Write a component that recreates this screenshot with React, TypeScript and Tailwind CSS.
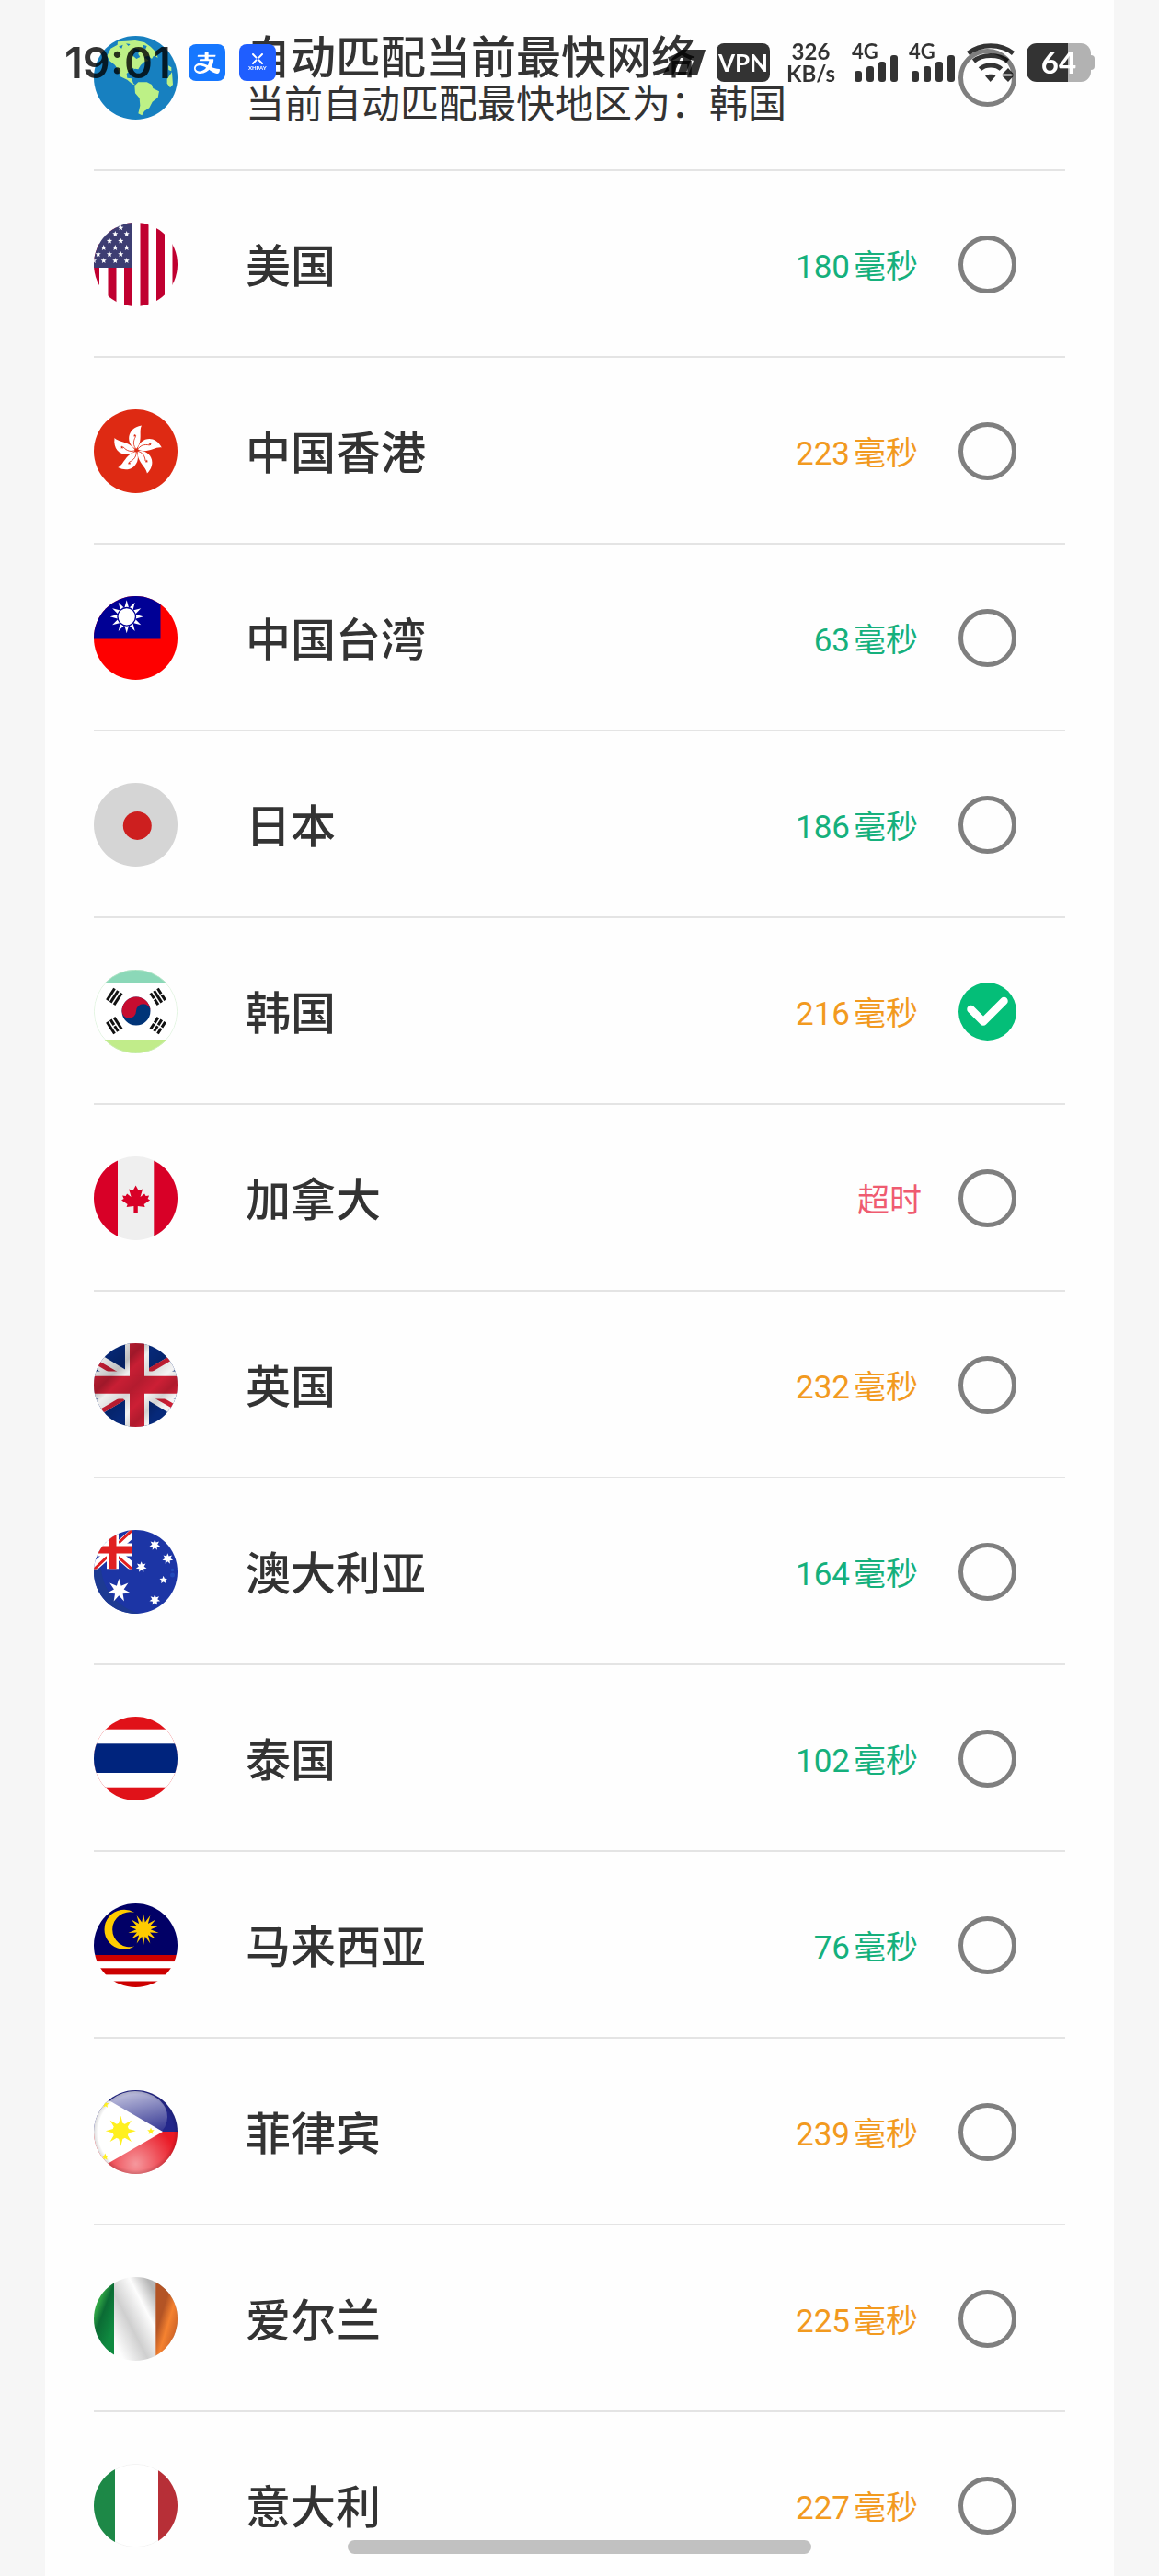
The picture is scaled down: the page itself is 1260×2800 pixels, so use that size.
import { useState, type ReactNode } from "react";
import { AiOutlineAlipay } from "react-icons/ai";

/** Points of a regular star with n tips, the first one pointing up. */
function star(cx: number, cy: number, outer: number, inner: number, n = 5): string {
  return Array.from({ length: n * 2 }, (_, i) => {
    const r = i % 2 === 0 ? outer : inner;
    const a = (Math.PI * i) / n - Math.PI / 2;
    return `${(cx + r * Math.cos(a)).toFixed(2)},${(cy + r * Math.sin(a)).toFixed(2)}`;
  }).join(" ");
}

function Flag({ children }: { children: ReactNode }) {
  return (
    <svg viewBox="0 0 91 91" className="size-[91px] shrink-0 rounded-full" aria-hidden="true">
      {children}
    </svg>
  );
}

function Globe() {
  return (
    <Flag>
      <rect width="91" height="91" fill="#1780c0" />
      <g transform="scale(0.3333) translate(-127 -27)" fill="#bdf186">
        <path d="M170 92L182 68L204 56L205 46L232 44L262 42L292 48L312 62L330 80L336 98L322 92L316 102L305 92L292 96L306 108L292 112L280 122L272 136L262 134L246 140L234 150L236 164L250 166L256 182L264 188L252 184L236 170L214 160L206 138L196 122L178 108Z" />
        <path d="M260 190L272 178L300 178L316 186L320 198L340 208L336 228L318 242L308 262L292 272L284 286L272 280L278 254L276 230L262 214Z" />
        <path d="M370 124L380 130L380 142L371 138ZM366 168L382 145L385 186L376 196L366 182Z" />
        <path d="M258 66L276 72L272 86L278 96L266 102L252 90ZM288 56L300 60L296 70L286 66Z" fill="#1780c0" />
        <path d="M208 62L222 56L218 68ZM232 52L246 54L240 60ZM236 142L256 132L262 142L258 134L250 146Z" fill="#1780c0" />
      </g>
    </Flag>
  );
}

function UsFlag() {
  const stars = [
    [29.3, 5.7], [23.3, 12.3], [35.7, 12.3], [17, 20], [29.3, 20], [10.7, 27.3], [23.3, 27.3],
    [35.7, 27.3], [4.7, 34.3], [17, 34.3], [29.3, 34.3], [10.7, 41.3], [23.3, 41.3], [35.7, 41.3], [0, 41.3],
  ];
  return (
    <Flag>
      <rect width="91" height="91" fill="#fff" />
      {[-3, 15.5, 33, 50.5, 68, 85.5].map((x) => (
        <rect key={x} x={x} width="9" height="91" fill="#c00030" />
      ))}
      <rect width="42" height="49" fill="#3d3d72" />
      {stars.map(([x, y], i) => (
        <polygon key={i} points={star(x, y, 3.2, 1.4)} fill="#fff" />
      ))}
    </Flag>
  );
}

function HongKongFlag() {
  return (
    <Flag>
      <rect width="91" height="91" fill="#de2a13" />
      {[0, 72, 144, 216, 288].map((a) => (
        <g key={a} transform={`translate(46.5 44.5) rotate(${a})`}>
          <path d="M-0.5 -1.5C-11.5 -6 -12 -24 5.5 -27C2 -20.500 7.500 -10 -0.5 -1.5Z" fill="#fff" />
          <path d="M0 -1C-4 -5 -4 -10 -1 -15" stroke="#de2a13" strokeWidth="0.8" fill="none" />
          <polygon points={star(-1.8, -16, 1.8, 0.8)} fill="#de2a13" />
        </g>
      ))}
    </Flag>
  );
}

function TaiwanFlag() {
  return (
    <Flag>
      <rect width="91" height="91" fill="#fe0000" />
      <rect width="72.5" height="46.5" fill="#000095" />
      <polygon points={star(35.7, 22.3, 18, 9.5, 12)} fill="#fff" />
      <circle cx="35.7" cy="22.3" r="9.8" fill="#fff" stroke="#000095" strokeWidth="1.4" />
    </Flag>
  );
}

function JapanFlag() {
  return (
    <Flag>
      <rect width="91" height="91" fill="#d5d5d5" />
      <circle cx="47.3" cy="46.4" r="15.5" fill="#cd1f1f" />
    </Flag>
  );
}

function KoreaFlag() {
  const trigrams = [
    { x: 22.3, y: 29.3, a: 33, broken: [false, false, false] },
    { x: 69.7, y: 29.3, a: -33, broken: [true, false, true] },
    { x: 22.3, y: 60.7, a: -33, broken: [false, true, false] },
    { x: 69.7, y: 60.7, a: 33, broken: [true, true, true] },
  ];
  return (
    <Flag>
      <rect width="91" height="91" fill="#fff" />
      <rect width="91" height="14.7" fill="#8bd8b8" />
      <rect y="76" width="91" height="15" fill="#c1ec8a" />
      <circle cx="45.5" cy="45.5" r="45.2" fill="none" stroke="#cdeccb" strokeWidth="0.6" />
      <g transform="translate(46 45)">
        <circle r="15.5" fill="#003478" />
        <path d="M-15.5 0A15.5 15.5 0 0 1 15.5 0A7.75 7.75 0 0 0 0 0A7.75 7.75 0 0 1 -15.5 0Z" fill="#c60c30" />
      </g>
      {trigrams.map((t, i) => (
        <g key={i} transform={`translate(${t.x} ${t.y}) rotate(${t.a})`} fill="#111">
          {t.broken.map((b, j) =>
            b ? (
              <path key={j} d={`M${j * 4.6 - 6.1} -7.5h3v6.8h-3zM${j * 4.6 - 6.1} 0.7h3v6.8h-3z`} />
            ) : (
              <rect key={j} x={j * 4.6 - 6.1} y="-7.5" width="3" height="15" />
            ),
          )}
        </g>
      ))}
    </Flag>
  );
}

function CanadaFlag() {
  return (
    <Flag>
      <rect width="91" height="91" fill="#efefef" />
      <rect width="26" height="91" fill="#d80027" />
      <rect x="65.3" width="26" height="91" fill="#d80027" />
      <path
        transform="translate(45.6 46.5)"
        d="M0 -15L3 -9.5L7.5 -11L5 -2.5L9.5 -6L11 -3.5L14.5 -4L13 -0.5L15.5 1L9 5.5L10 8.5L2.2 7.5V14.8H-2.2V7.5L-10 8.5L-9 5.5L-15.5 1L-13 -0.5L-14.5 -4L-11 -3.5L-9.5 -6L-5 -2.5L-7.5 -11L-3 -9.5Z"
        fill="#d80027"
      />
    </Flag>
  );
}

function UkFlag() {
  return (
    <Flag>
      <defs>
        <linearGradient id="uk-wave" x1="0" y1="0" x2="1" y2="1">
          <stop offset="0.1" stopColor="#000" stopOpacity="0" />
          <stop offset="0.3" stopColor="#000" stopOpacity="0.22" />
          <stop offset="0.38" stopColor="#000" stopOpacity="0.02" />
          <stop offset="0.5" stopColor="#000" stopOpacity="0.12" />
          <stop offset="0.62" stopColor="#000" stopOpacity="0" />
          <stop offset="0.72" stopColor="#000" stopOpacity="0.14" />
          <stop offset="0.8" stopColor="#000" stopOpacity="0" />
        </linearGradient>
      </defs>
      <rect width="91" height="91" fill="#06297a" />
      <path d="M-14 9L106 81M-14 81L106 9" stroke="#f4f4f4" strokeWidth="16" />
      <path d="M-10 13L24 33M60 30L96 9M-4 81L32 60M68 58L98 75" stroke="#cc1f35" strokeWidth="5" />
      <path d="M47 0V91" stroke="#f4f4f4" strokeWidth="26" />
      <path d="M0 45.5H91" stroke="#f4f4f4" strokeWidth="30" />
      <path d="M47 0V91" stroke="#cc1f35" strokeWidth="16" />
      <path d="M0 45.3H91" stroke="#cc1f35" strokeWidth="19" />
      <rect width="91" height="91" fill="url(#uk-wave)" />
    </Flag>
  );
}

function AustraliaFlag() {
  return (
    <Flag>
      <rect width="91" height="91" fill="#1c35a5" />
      <path d="M0 42H8C10 66 26 84 50 91H0Z" fill="#1d3a92" />
      <svg width="42" height="42.5" viewBox="0 0 42 42.5">
        <path d="M-2 42L44 2M-2 2L44 42" stroke="#fff" strokeWidth="9" />
        <path d="M0 43L18 26M26 15L44 -2M24 27L42 43" stroke="#e01f20" strokeWidth="3" />
        <path d="M20.5 0V42.5" stroke="#fff" strokeWidth="13" />
        <path d="M0 21.5H42" stroke="#fff" strokeWidth="14" />
        <path d="M20.5 0V42.5M0 21.5H42" stroke="#e01f20" strokeWidth="8" />
      </svg>
      <g fill="#fff">
        <polygon points={star(27.3, 65.7, 13, 5.5, 7)} />
        <polygon points={star(66.3, 16.3, 6, 3, 7)} />
        <polygon points={star(80.3, 31.3, 6, 3, 7)} />
        <polygon points={star(51.7, 40.3, 6, 3, 7)} />
        <polygon points={star(66.3, 76, 6, 3, 7)} />
        <polygon points={star(75.7, 54.3, 4.5, 2)} />
      </g>
      <circle cx="85.5" cy="49" r="2.5" fill="#2149b8" />
      <circle cx="85.5" cy="43.5" r="1.8" fill="#2149b8" />
    </Flag>
  );
}

function ThailandFlag() {
  return (
    <Flag>
      <rect width="91" height="91" fill="#e01219" />
      <rect y="13.7" width="91" height="63" fill="#fff" />
      <rect y="29.3" width="91" height="31.7" fill="#00247d" />
    </Flag>
  );
}

function MalaysiaFlag() {
  return (
    <Flag>
      <rect width="91" height="91" fill="#fff" />
      <rect width="91" height="56" fill="#010066" />
      {[56, 70.3, 84.5].map((y) => (
        <rect key={y} y={y} width="91" height="7.1" fill="#cc0000" />
      ))}
      <path d="M44.3 10A21.5 21.5 0 1 0 44.3 46.6A19 19 0 1 1 44.3 10Z" fill="#ffcc00" />
      <polygon points={star(54, 28.2, 17, 7.8, 14)} fill="#ffcc00" />
    </Flag>
  );
}

function PhilippinesFlag() {
  return (
    <Flag>
      <defs>
        <linearGradient id="ph-gloss" x1="0" y1="0" x2="0.3" y2="1">
          <stop offset="0" stopColor="#fff" stopOpacity="0.8" />
          <stop offset="1" stopColor="#fff" stopOpacity="0.05" />
        </linearGradient>
        <radialGradient id="ph-glow" cx="0.5" cy="0.88" r="0.5">
          <stop offset="0" stopColor="#fff" stopOpacity="0.55" />
          <stop offset="1" stopColor="#fff" stopOpacity="0" />
        </radialGradient>
        <radialGradient id="ph-rim" cx="0.5" cy="0.5" r="0.5">
          <stop offset="0.9" stopColor="#000" stopOpacity="0" />
          <stop offset="1" stopColor="#000" stopOpacity="0.14" />
        </radialGradient>
      </defs>
      <rect width="91" height="45" fill="#23268a" />
      <rect y="45" width="91" height="46" fill="#ea1a26" />
      <polygon points="75,45 -6,-2 -6,92" fill="#fff" />
      <ellipse cx="45" cy="29" rx="35" ry="28" fill="url(#ph-gloss)" />
      <rect width="91" height="91" fill="url(#ph-glow)" />
      <rect width="91" height="91" fill="url(#ph-rim)" />
      <g fill="#fff01f">
        <circle cx="29.3" cy="44.3" r="8.8" />
        <polygon points={star(29.3, 44.3, 16.5, 7, 8)} />
        <polygon points={star(12.7, 15.5, 4, 1.8)} />
        <polygon points={star(62, 44.6, 4, 1.8)} />
        <polygon points={star(12.3, 72.5, 4, 1.8)} />
      </g>
    </Flag>
  );
}

function IrelandFlag() {
  return (
    <Flag>
      <defs>
        <linearGradient id="ie-green" x1="0" y1="0.1" x2="0.5" y2="0.9">
          <stop offset="0" stopColor="#0b6b34" />
          <stop offset="0.25" stopColor="#3ab54a" />
          <stop offset="0.55" stopColor="#0b6b34" />
          <stop offset="1" stopColor="#0f8a40" />
        </linearGradient>
        <linearGradient id="ie-white" gradientUnits="userSpaceOnUse" x1="12" y1="50" x2="78" y2="16">
          <stop offset="0" stopColor="#fdfdfd" />
          <stop offset="0.32" stopColor="#cfcfcf" />
          <stop offset="0.62" stopColor="#fdfdfd" />
          <stop offset="0.85" stopColor="#b5b5b5" />
        </linearGradient>
        <linearGradient id="ie-orange" x1="0.2" y1="0.2" x2="0.8" y2="0.9">
          <stop offset="0" stopColor="#b35425" />
          <stop offset="0.25" stopColor="#b35425" />
          <stop offset="0.55" stopColor="#f58230" />
          <stop offset="1" stopColor="#c25a25" />
        </linearGradient>
      </defs>
      <rect width="91" height="91" fill="url(#ie-white)" />
      <rect width="22" height="91" fill="url(#ie-green)" />
      <rect x="67.3" width="24" height="91" fill="url(#ie-orange)" />
    </Flag>
  );
}

function ItalyFlag() {
  return (
    <Flag>
      <rect width="91" height="91" fill="#fff" />
      <circle cx="45.5" cy="45.5" r="45.2" fill="none" stroke="#e4e4e4" strokeWidth="0.5" />
      <rect width="23" height="91" fill="#1d8847" />
      <rect x="70" width="21" height="91" fill="#b72f37" />
    </Flag>
  );
}

type Region = {
  id: string;
  name: string;
  note?: string;
  flag: ReactNode;
  latency?: number | "timeout";
};

const regions: Region[] = [
  { id: "auto", name: "自动匹配当前最快网络", note: "当前自动匹配最快地区为：韩国", flag: <Globe /> },
  { id: "us", name: "美国", flag: <UsFlag />, latency: 180 },
  { id: "hk", name: "中国香港", flag: <HongKongFlag />, latency: 223 },
  { id: "tw", name: "中国台湾", flag: <TaiwanFlag />, latency: 63 },
  { id: "jp", name: "日本", flag: <JapanFlag />, latency: 186 },
  { id: "kr", name: "韩国", flag: <KoreaFlag />, latency: 216 },
  { id: "ca", name: "加拿大", flag: <CanadaFlag />, latency: "timeout" },
  { id: "gb", name: "英国", flag: <UkFlag />, latency: 232 },
  { id: "au", name: "澳大利亚", flag: <AustraliaFlag />, latency: 164 },
  { id: "th", name: "泰国", flag: <ThailandFlag />, latency: 102 },
  { id: "my", name: "马来西亚", flag: <MalaysiaFlag />, latency: 76 },
  { id: "ph", name: "菲律宾", flag: <PhilippinesFlag />, latency: 239 },
  { id: "ie", name: "爱尔兰", flag: <IrelandFlag />, latency: 225 },
  { id: "it", name: "意大利", flag: <ItalyFlag />, latency: 227 },
];

function Latency({ value }: { value: number | "timeout" }) {
  if (value === "timeout") {
    return <span className="mr-10 text-[35px] text-[#ef5b70]">超时</span>;
  }
  return (
    <span
      className={`mr-11 flex items-baseline gap-1 pt-1 text-[35px] ${value < 200 ? "text-[#15b07c]" : "text-[#f29a1f]"}`}
    >
      <span className="font-['Roboto']">{value}</span>
      <span>毫秒</span>
    </span>
  );
}

function RegionRow({ region, checked, onSelect }: { region: Region; checked: boolean; onSelect: () => void }) {
  return (
    <li>
      <label className="flex h-[203px] cursor-pointer items-center border-b-2 border-[#e4e4e4] pt-0.5 pr-[53px]">
        {region.flag}
        <span className="ml-[74px] flex flex-1 flex-col pb-1 text-[#333]">
          <span className="text-[49px] leading-[54px] font-medium whitespace-nowrap">{region.name}</span>
          {region.note && <span className="text-[42px] leading-[48px] whitespace-nowrap">{region.note}</span>}
        </span>
        {region.latency !== undefined && <Latency value={region.latency} />}
        <span className="relative size-[63px] shrink-0">
          <input
            type="radio"
            name="region"
            checked={checked}
            onChange={onSelect}
            className="peer block size-full appearance-none rounded-full border-[5px] border-[#7f7f7f] checked:border-0 checked:bg-[#04be78]"
          />
          <svg
            viewBox="0 0 63 63"
            className="pointer-events-none absolute inset-0 hidden peer-checked:block"
            fill="none"
            stroke="#fff"
            strokeWidth="8.5"
            strokeLinecap="round"
            strokeLinejoin="round"
            aria-hidden="true"
          >
            <path d="M13.5 29L27 42.5L49.5 20" />
          </svg>
        </span>
      </label>
    </li>
  );
}

function Signal() {
  return (
    <div className="relative flex h-[42px] w-[50px] items-end justify-end gap-[5px]">
      <span className="absolute top-0 left-0 text-[22px] leading-[18px] font-bold text-black/80">4G</span>
      <span className="h-3 w-2 rounded-[3px] bg-black/80" />
      <span className="h-[17px] w-2 rounded-[3px] bg-black/80" />
      <span className="h-[22px] w-2 rounded-[3px] bg-black/80" />
      <span className="h-[29px] w-2 rounded-[3px] bg-black/80" />
    </div>
  );
}

function StatusBar() {
  return (
    <header className="pointer-events-none fixed inset-x-0 top-0 flex items-center justify-between pt-[47px] pr-[70px] pl-[70px] font-['Lato','Noto_Sans_CJK_SC',sans-serif]">
      <div className="flex items-center gap-[15px]">
        <span className="mr-1 font-['Inter'] text-[47px] leading-[42px] font-semibold text-black/80">19:01</span>
        <span className="flex size-10 items-center justify-center rounded-lg bg-[#1677ff]">
          <AiOutlineAlipay className="size-8 text-white" />
        </span>
        <span className="flex size-10 flex-col items-center justify-center rounded-lg bg-[#1f5eff] text-white">
          <svg viewBox="0 0 12 12" className="size-3" stroke="currentColor" strokeWidth="2" strokeLinecap="round" aria-hidden="true">
            <path d="M1 1L4.5 4.6M11 1L7.5 4.6M1 11L4.5 7.4M11 11L7.5 7.4" />
          </svg>
          <span className="text-[6px] leading-2 font-bold">XHPAY</span>
        </span>
      </div>
      <div className="flex h-[42px] items-center gap-3">
        <svg viewBox="0 0 48 28" className="h-7 w-12 fill-black/80" aria-hidden="true">
          <path d="M22 0H48L39 28H29L36 9H33L26 28H17L24 9H21L13 28H1L12 9Z" />
        </svg>
        <span className="flex h-[42px] w-[58px] items-center justify-center rounded-lg bg-black/80 text-[26px] font-bold text-white">
          VPN
        </span>
        <span className="mx-2 flex w-[49px] flex-col items-center text-[24px] leading-[24px] font-bold text-black/80">
          <span>326</span>
          <span>KB/s</span>
        </span>
        <Signal />
        <Signal />
        <svg viewBox="0 0 54 42" className="h-[42px] w-[54px] opacity-80" aria-hidden="true">
          <g fill="none" stroke="#000" strokeWidth="5">
            <path d="M2.5 11C16 0 38 0 51.5 11" />
            <path d="M8.5 19.5C18 11.5 36 11.5 45.5 19.5" />
            <path d="M15.5 28C21 22.5 33 22.5 38.5 28" />
          </g>
          <path d="M21 35.5C24.5 33 29.5 33 32.5 35.5L26.7 42Z" />
          <path d="M39.5 33.5H52L46 27ZM39.5 35.5H52L46 42Z" />
        </svg>
        <div className="flex items-center">
          <span className="flex h-[42px] w-[70px] items-center justify-center rounded-[11px] bg-linear-to-r from-black/80 from-64% to-black/30 to-64% text-[33px] font-bold text-white">
            64
          </span>
          <span className="h-4 w-1 rounded-r-sm bg-black/30" />
        </div>
      </div>
    </header>
  );
}

export default function App() {
  const [selected, setSelected] = useState("kr");
  return (
    <div className="h-screen overflow-hidden bg-[#f6f6f6] px-[49px] font-['Noto_Sans_CJK_SC',sans-serif]">
      <main className="min-h-full bg-[#fefefe] px-[53px]">
        <ul className="-translate-y-[17px]">
          {regions.map((r) => (
            <RegionRow key={r.id} region={r} checked={selected === r.id} onSelect={() => setSelected(r.id)} />
          ))}
        </ul>
      </main>
      <StatusBar />
      <div className="fixed bottom-6 left-[30%] h-[15px] w-2/5 rounded-full bg-[#c1c1c1]" />
    </div>
  );
}
